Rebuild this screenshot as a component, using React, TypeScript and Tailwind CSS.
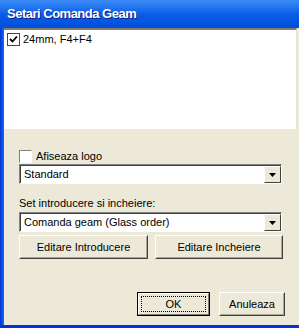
import React from "react";

const font = { fontFamily: '"Liberation Sans", Arial, sans-serif' };

function Check({ checked }: { checked?: boolean }) {
  return (
    <div className="w-[13px] h-[13px] border border-[#1c5180] bg-white flex items-center justify-center box-border">
      {checked && (
        <svg width="9" height="9" viewBox="0 0 9 9">
          <path d="M1 4 L3.5 6.5 L8 1.5" stroke="#000" strokeWidth="1.8" fill="none" />
        </svg>
      )}
    </div>
  );
}

function Combo({ text }: { text: string }) {
  return (
    <div className="h-[20px] w-[263px] flex bg-white border-t border-l border-[#808080] border-r border-b border-r-[#ffffff] border-b-[#ffffff] box-border">
      <div className="flex-1 flex items-center pl-[3px] border-t border-l border-[#404040] border-r-0 border-b-0 text-[11px] text-black">
        {text}
      </div>
      <div className="w-[17px] border-t border-[#404040] flex items-stretch">
        <div className="flex-1 bg-[#ece9d8] border border-t-[#fff] border-l-[#fff] border-r-[#404040] border-b-[#404040] flex items-center justify-center">
          <svg width="7" height="4" viewBox="0 0 7 4">
            <path d="M0 0 H7 L3.5 4 Z" fill="#000" />
          </svg>
        </div>
      </div>
    </div>
  );
}

function Btn({ children, w, focus }: { children: React.ReactNode; w: string; focus?: boolean }) {
  return (
    <div className={`${w} h-[24px] bg-[#ece9d8] border ${focus ? "border-[#000]" : "border-[#ffffff] border-r-[#404040] border-b-[#404040]"} flex items-stretch box-border`}>
      <div className={`flex-1 flex items-center justify-center text-[11px] text-black ${focus ? "border border-[#fff] border-r-[#808080] border-b-[#808080] m-0" : "border border-transparent border-r-[#aca899] border-b-[#aca899]"}`}>
        {focus ? (
          <div className="flex-1 self-stretch m-[2px] border border-dotted border-black flex items-center justify-center">{children}</div>
        ) : (
          children
        )}
      </div>
    </div>
  );
}

export default function App() {
  return (
    <div style={font} className="w-[299px] h-[328px] flex flex-col bg-[#0831d9] overflow-hidden">
      <div className="h-[28px] bg-gradient-to-b from-[#3b8cf7] via-[#0a5de8] to-[#0250d8] flex items-center pl-[7px]">
        <span className="text-white font-bold text-[13px] tracking-[-0.5px]" style={{ textShadow: "1px 1px 0 #0a1f8f" }}>
          Setari Comanda Geam
        </span>
      </div>
      <div className="flex-1 flex">
        <div className="w-[4px] bg-gradient-to-r from-[#0831d9] to-[#166aee]" />
        <div className="flex-1 bg-[#ece9d8] flex flex-col">
          <div className="h-[101px] bg-white border-t-2 border-t-[#7f7d75] border-r border-r-[#e5e3da] mr-[2px] px-[3px] pt-[2px]">
            <div className="flex items-center gap-[3px] h-[15px]">
              <Check checked />
              <span className="text-[11px] text-black">24mm, F4+F4</span>
            </div>
          </div>
          <div className="pl-[15px] pt-[20px] flex flex-col">
            <div className="flex items-center gap-[4px] h-[14px]">
              <div className="w-[13px] h-[13px] bg-white border border-[#808080] border-r-[#fff] border-b-[#fff]" />
              <span className="text-[11px] text-black">Afiseaza logo</span>
            </div>
            <div className="mt-[1px]">
              <Combo text="Standard" />
            </div>
            <div className="mt-[12px] text-[11px] text-black h-[15px] leading-[15px]">Set introducere si incheiere:</div>
            <div className="mt-[1px]">
              <Combo text="Comanda geam (Glass order)" />
            </div>
            <div className="mt-[3px] flex gap-[7px]">
              <Btn w="w-[129px]">Editare Introducere</Btn>
              <Btn w="w-[128px]">Editare Incheiere</Btn>
            </div>
            <div className="mt-[33px] flex gap-[9px] pl-[118px]">
              <Btn w="w-[73px]" focus>OK</Btn>
              <Btn w="w-[66px]">Anuleaza</Btn>
            </div>
          </div>
        </div>
      </div>
      <div className="h-[3px] bg-[#0831d9]" />
    </div>
  );
}
